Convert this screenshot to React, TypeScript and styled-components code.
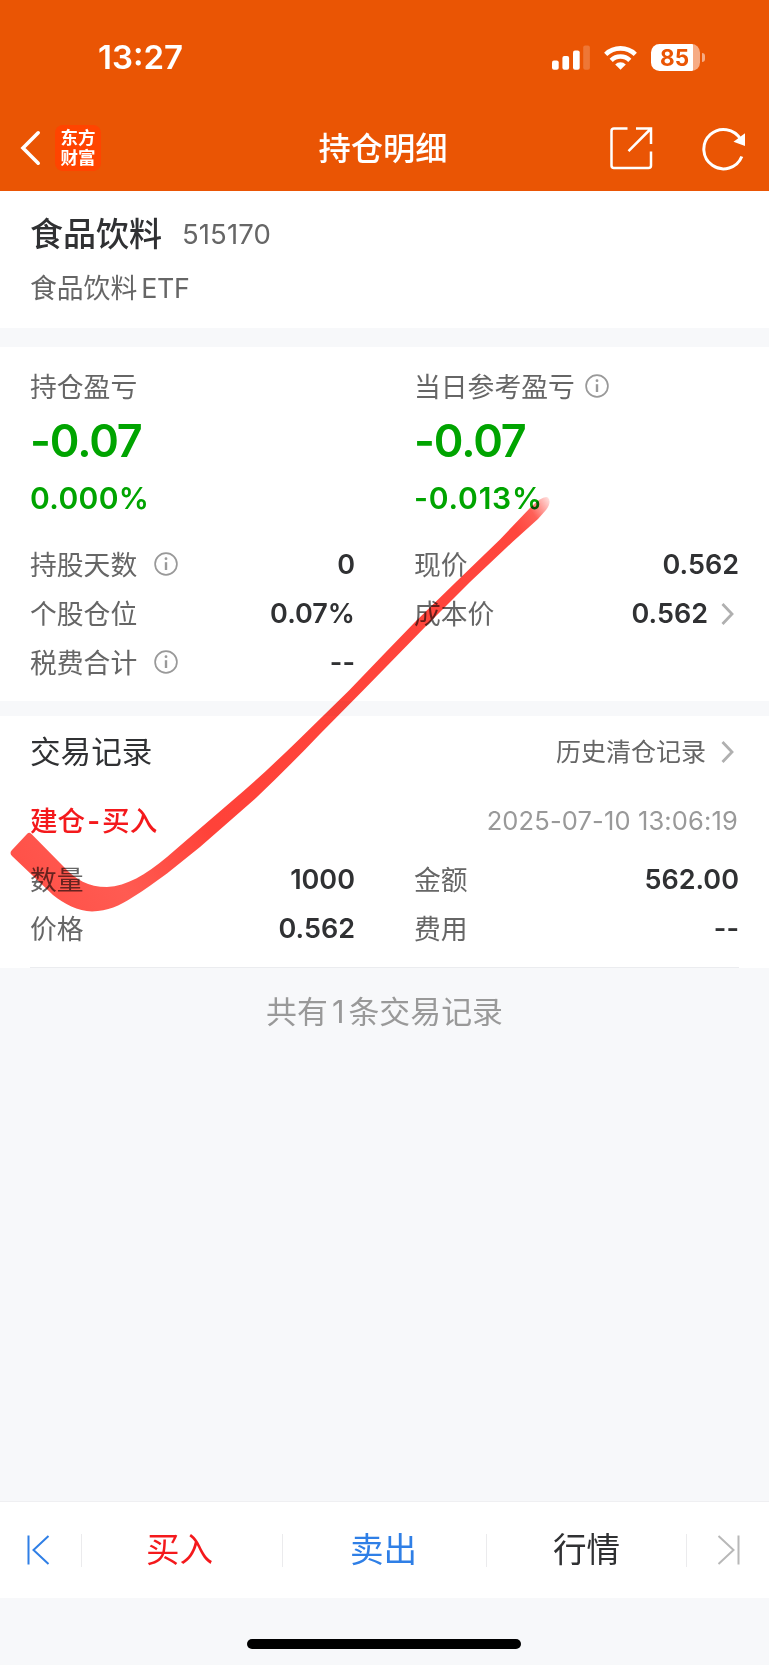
import React from 'react';
import styled, { createGlobalStyle } from 'styled-components';

const GlobalStyle = createGlobalStyle`
  * { box-sizing: border-box; }
  body {
    margin: 0;
    background: #f7f8fa;
    font-family: Inter, 'Noto Sans CJK SC', sans-serif;
    color: #303133;
  }
`;

const Page = styled.div`
  position: relative;
  width: 769px;
  height: 1665px;
  display: flex;
  flex-direction: column;
  background: #f7f8fa;
  overflow: hidden;
`;

const Header = styled.header`
  height: 191px;
  background: #ea5504;
  color: #fff;
`;

const StatusBar = styled.div`
  height: 106px;
  padding: 8px 64px 0 98px;
  display: flex;
  align-items: center;
  justify-content: space-between;
`;

const Time = styled.span`
  font-size: 33px;
  font-weight: 600;
`;

const StatusIcons = styled.div`
  display: flex;
  align-items: center;
  gap: 14px;
`;

const Battery = styled.div`
  display: flex;
  align-items: center;
  gap: 2px;
`;

const BatteryBody = styled.div`
  width: 49px;
  height: 27px;
  border-radius: 8.5px;
  background: linear-gradient(to right, #fff 42px, #f6ab84 42px);
  color: #ea5504;
  font-size: 22.5px;
  font-weight: 700;
  line-height: 27px;
  padding-left: 9px;
`;

const BatteryNub = styled.div`
  width: 3px;
  height: 9px;
  border-radius: 0 4px 4px 0;
  background: #f6ab84;
`;

const NavBar = styled.div`
  height: 85px;
  display: grid;
  grid-template-columns: 1fr auto 1fr;
  align-items: center;
  padding: 0 23px 0 19px;
`;

const NavStart = styled.div`
  display: flex;
  align-items: center;
  gap: 14px;
  padding-bottom: 1px;
`;

const Logo = styled.div`
  width: 46px;
  height: 46px;
  border-radius: 8px;
  background: #ff4400;
  display: flex;
  flex-direction: column;
  align-items: center;
  justify-content: center;
  padding-bottom: 1px;
  font-size: 17.5px;
  font-weight: 700;
  line-height: 19.5px;
`;

const Title = styled.h1`
  margin: 0;
  padding-left: 1px;
  font-size: 32.3px;
  font-weight: 500;
  line-height: 40px;
`;

const NavEnd = styled.div`
  display: flex;
  align-items: center;
  justify-content: flex-end;
  gap: 49px;
`;

const Card = styled.section<{ $h: number; $gap?: number; $top: number }>`
  height: ${(p) => p.$h}px;
  margin-bottom: ${(p) => p.$gap ?? 0}px;
  padding: ${(p) => p.$top}px 30px 0;
  background: #fff;
`;

const NameLine = styled.div`
  height: 50px;
  display: flex;
  align-items: center;
  gap: 20px;
`;

const StockName = styled.span`
  padding-bottom: 4px;
  font-size: 33px;
  font-weight: 500;
`;

const StockCode = styled.span`
  font-size: 27.5px;
  letter-spacing: 0.1px;
  color: #666;
`;

const SubName = styled.div`
  height: 58px;
  line-height: 58px;
  font-size: 26.8px;
  color: #666;
  span { margin-left: 4px; letter-spacing: -0.3px; }
`;

const Columns = styled.div`
  display: grid;
  grid-template-columns: 325px 325px;
  column-gap: 59px;
`;

const Label = styled.span`
  display: flex;
  align-items: center;
  padding-bottom: 2px;
  font-size: 26.8px;
  color: #666;
  svg { margin-left: 17px; }
`;

const SummaryLabel = styled(Label)`
  height: 40px;
  padding-bottom: 3px;
  svg { margin-left: 10px; }
`;

const Profit = styled.div`
  height: 68px;
  line-height: 68px;
  font-size: 45px;
  font-weight: 600;
  letter-spacing: -1.1px;
  color: #00a400;
`;

const Percent = styled.div<{ $track?: number }>`
  height: 46px;
  line-height: 46px;
  font-size: 30px;
  font-weight: 600;
  letter-spacing: ${(p) => p.$track ?? 0.35}px;
  color: #00a400;
`;

const Details = styled.div<{ $top: number }>`
  display: grid;
  grid-template-columns: 325px 325px;
  column-gap: 59px;
  grid-auto-rows: 49px;
  margin-top: ${(p) => p.$top}px;
`;

const Field = styled.div`
  display: flex;
  align-items: center;
  justify-content: space-between;
`;

const Value = styled.span`
  display: flex;
  align-items: center;
  gap: 13px;
  font-size: 27px;
  font-weight: 600;
  color: #303133;
  svg { margin-right: 5px; }
`;

const RecordHead = styled.div`
  height: 72px;
  display: flex;
  align-items: center;
  justify-content: space-between;
`;

const RecordTitle = styled.span`
  padding-bottom: 4px;
  font-size: 30.6px;
`;

const HistoryLink = styled.span`
  display: flex;
  align-items: center;
  gap: 15px;
  padding-bottom: 1px;
  font-size: 25px;
  color: #666;
  span { padding-bottom: 3px; }
  svg { margin-right: 5px; }
`;

const TradeHead = styled.div`
  height: 63px;
  padding: 1px 1px 0 0;
  display: flex;
  align-items: center;
  justify-content: space-between;
`;

const TradeType = styled.span`
  padding-bottom: 3px;
  font-size: 27.6px;
  font-weight: 500;
  color: #f4191c;
  i { font-style: normal; font-weight: 600; margin: 0 2px; }
`;

const TradeTime = styled.span`
  font-size: 25.5px;
  letter-spacing: 0.14px;
  color: #999;
`;

const Divider = styled.div`
  height: 1px;
  margin: -1px 30px 0;
  background: #ebecef;
`;

const Total = styled.div`
  flex: 1;
  padding-top: 24px;
  text-align: center;
  font-size: 30.9px;
  line-height: 40px;
  color: #999;
  span { margin: 0 4px 0 4px; }
`;

const ActionBar = styled.nav`
  height: 97px;
  border-top: 1px solid #efeff2;
  background: #fff;
  display: grid;
  grid-template-columns: 82px 201px 204px 200px 82px;
  align-items: center;
`;

const Action = styled.div<{ $color: string; $shift?: number; $last?: boolean }>`
  height: 33px;
  display: flex;
  align-items: center;
  justify-content: center;
  padding-right: ${(p) => p.$shift ?? 0}px;
  padding-left: ${(p) => (p.$last ? 1 : 0)}px;
  border-right: ${(p) => (p.$last ? 'none' : '1px solid #ebebed')};
  font-size: 33.6px;
  color: ${(p) => p.$color};
  span { padding-bottom: 5px; }
`;

const HomeArea = styled.div`
  height: 67px;
  display: flex;
  justify-content: center;
  padding: 41px 1px 0 0;
`;

const HomeIndicator = styled.div`
  width: 274px;
  height: 10px;
  border-radius: 5px;
  background: #000;
`;

const Brush = styled.svg`
  position: absolute;
  left: 0;
  top: 480px;
  mix-blend-mode: multiply;
  pointer-events: none;
`;

const InfoIcon = () => (
  <svg width="24" height="24" viewBox="0 0 24 24" fill="none" stroke="#999">
    <circle cx="12" cy="12" r="10.9" strokeWidth="1.7" />
    <path d="M12 10.2V18" strokeWidth="2.4" />
    <circle cx="12" cy="6.7" r="1.4" fill="#999" stroke="none" />
  </svg>
);

const Chevron = () => (
  <svg width="13" height="22" viewBox="0 0 13 22" fill="none" stroke="#b0b0b0" strokeWidth="2.8">
    <path d="M1.5 1L11 11L1.5 21" />
  </svg>
);

const SignalIcon = () => (
  <svg width="38" height="25" viewBox="0 0 38 25" fill="#fff">
    <rect x="0" y="15.5" width="6.7" height="9.2" rx="2" />
    <rect x="10.4" y="11" width="6.7" height="13.7" rx="2" />
    <rect x="21" y="5.5" width="6.7" height="19.2" rx="2" />
    <rect x="31.2" y="0.5" width="6.7" height="24.2" rx="2" opacity="0.2" />
  </svg>
);

const WifiIcon = () => (
  <svg width="33" height="25" viewBox="0 0 33 25" fill="none" stroke="#fff" strokeWidth="4.6">
    <path d="M1.7 9.3A21.5 21.5 0 0 1 31.3 9.3" />
    <path d="M7.2 15.3A13.3 13.3 0 0 1 25.8 15.3" />
    <path d="M11.2 19.4A7.6 7.6 0 0 1 21.8 19.4L16.5 24.8Z" fill="#fff" stroke="none" />
  </svg>
);

const ShareIcon = () => (
  <svg width="43" height="43" viewBox="0 0 43 43" fill="none" stroke="#fff" strokeWidth="2.5">
    <path d="M17.5 1.5H4Q1.5 1.5 1.5 4V38.5Q1.5 41 4 41H38.5Q41 41 41 38.5V24.5" />
    <path d="M26 1.5H41V17M40.5 2L18.5 24.2" />
  </svg>
);

const RefreshIcon = () => (
  <svg width="44" height="44" viewBox="0 0 44 44" fill="none" stroke="#fff" strokeWidth="3">
    <path d="M39.8 29.5A19.7 19.7 0 1 1 38.6 12.3" />
    <path d="M31.5 14.7L43 6.2V19Z" fill="#fff" stroke="none" />
  </svg>
);

const trades = [
  { label: '数量', value: '1000' },
  { label: '金额', value: '562.00' },
  { label: '价格', value: '0.562' },
  { label: '费用', value: '--' },
];

export default function App() {
  return (
    <Page>
      <GlobalStyle />
      <Header>
        <StatusBar>
          <Time>13:27</Time>
          <StatusIcons>
            <SignalIcon />
            <WifiIcon />
            <Battery>
              <BatteryBody>85</BatteryBody>
              <BatteryNub />
            </Battery>
          </StatusIcons>
        </StatusBar>
        <NavBar>
          <NavStart>
            <svg width="22" height="36" viewBox="0 0 22 36" fill="none" stroke="#fff" strokeWidth="3.6" strokeLinecap="round">
              <path d="M19.2 2.8L4 18L19.2 33.2" />
            </svg>
            <Logo>
              <span>东方</span>
              <span>财富</span>
            </Logo>
          </NavStart>
          <Title>持仓明细</Title>
          <NavEnd>
            <ShareIcon />
            <RefreshIcon />
          </NavEnd>
        </NavBar>
      </Header>

      <Card $h={137} $gap={19} $top={18}>
        <NameLine>
          <StockName>食品饮料</StockName>
          <StockCode>515170</StockCode>
        </NameLine>
        <SubName>食品饮料<span>ETF</span></SubName>
      </Card>

      <Card $h={354} $gap={15} $top={20}>
        <Columns>
          <div>
            <SummaryLabel>持仓盈亏</SummaryLabel>
            <Profit>-0.07</Profit>
            <Percent>0.000%</Percent>
          </div>
          <div>
            <SummaryLabel>当日参考盈亏<InfoIcon /></SummaryLabel>
            <Profit>-0.07</Profit>
            <Percent $track={0.8}>-0.013%</Percent>
          </div>
        </Columns>
        <Details $top={19}>
          <Field><Label>持股天数<InfoIcon /></Label><Value>0</Value></Field>
          <Field><Label>现价</Label><Value>0.562</Value></Field>
          <Field><Label>个股仓位</Label><Value>0.07%</Value></Field>
          <Field><Label>成本价</Label><Value>0.562<Chevron /></Value></Field>
          <Field><Label>税费合计<InfoIcon /></Label><Value>--</Value></Field>
        </Details>
      </Card>

      <Card $h={252} $top={0}>
        <RecordHead>
          <RecordTitle>交易记录</RecordTitle>
          <HistoryLink><span>历史清仓记录</span><Chevron /></HistoryLink>
        </RecordHead>
        <TradeHead>
          <TradeType>建仓<i>-</i>买入</TradeType>
          <TradeTime>2025-07-10 13:06:19</TradeTime>
        </TradeHead>
        <Details $top={4}>
          {trades.map((t) => (
            <Field key={t.label}><Label>{t.label}</Label><Value>{t.value}</Value></Field>
          ))}
        </Details>
      </Card>
      <Divider />
      <Total>共有<span>1</span>条交易记录</Total>

      <ActionBar>
        <Action $color="#2f7fe6" $shift={6}>
          <svg width="24" height="30" viewBox="0 0 24 30" fill="none" stroke="currentColor" strokeWidth="2">
            <path d="M2.5 0.5V29.5M22.5 1L7.5 15L22.5 29" />
          </svg>
        </Action>
        <Action $color="#f4191c" $shift={5}><span>买入</span></Action>
        <Action $color="#2f7fe6" $shift={2}><span>卖出</span></Action>
        <Action $color="#303133"><span>行情</span></Action>
        <Action $color="#b8b8b8" $last>
          <svg width="24" height="30" viewBox="0 0 24 30" fill="none" stroke="currentColor" strokeWidth="2">
            <path d="M21.5 0.5V29.5M1.5 1L16.5 15L1.5 29" />
          </svg>
        </Action>
      </ActionBar>
      <HomeArea>
        <HomeIndicator />
      </HomeArea>

      <Brush width="560" height="440" viewBox="0 480 560 440">
        <defs>
          <linearGradient id="ink" gradientUnits="userSpaceOnUse" x1="10" y1="860" x2="550" y2="498">
            <stop offset="0" stopColor="#ff5148" />
            <stop offset="0.12" stopColor="#ff5b52" />
            <stop offset="0.28" stopColor="#ff4239" />
            <stop offset="0.93" stopColor="#ff463d" />
            <stop offset="0.965" stopColor="#ff6058" />
            <stop offset="1" stopColor="#ff6058" stopOpacity="0.15" />
          </linearGradient>
        </defs>
        <path
          fill="url(#ink)"
          d="M31 833.5L63 866C76 880 88 887 107 887C127 886 145 875 167 857L200 828.5L243 791.5C263 774 282 756 300 738.5L349 690.5L385 653L415 622L456 582L500 539.5L530 508Q543 495 548 497.5Q552 502 546 510L538 519L513 541.5L470 582L428 624L385 668L363 690.5L320 734C299 756 278 777 257 797L200 847L167 873.5C155 882 145 890 133 897C119 906 108 911 92 911.5C78 911 64 904 53 895L12 856Q9 853 12 850L27 834Q29 832 31 833.5Z"
        />
      </Brush>
    </Page>
  );
}
